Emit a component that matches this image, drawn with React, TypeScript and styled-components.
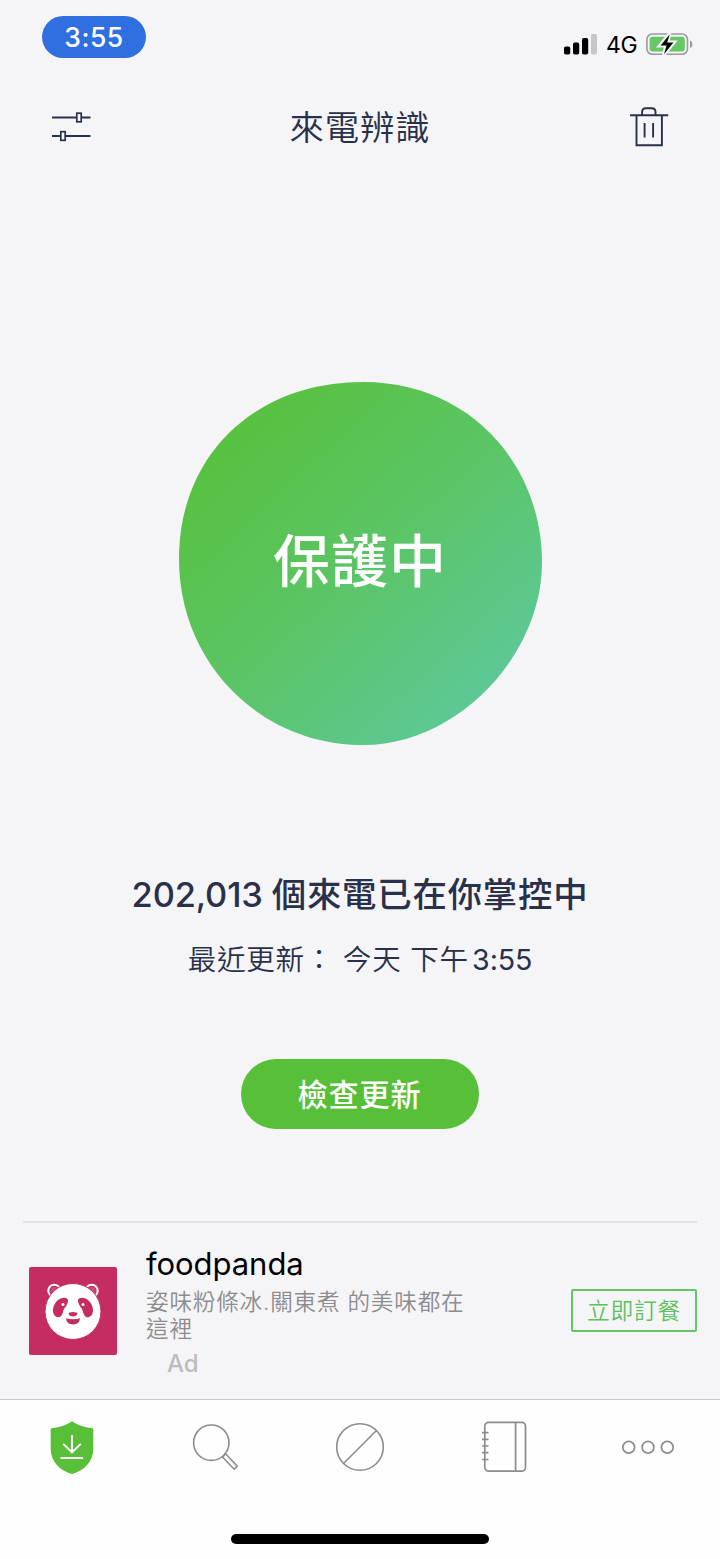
import React from "react";
import styled, { createGlobalStyle } from "styled-components";

const INK = "#29304a";
const GREEN = "#57c038";
const GRAY = "#8c8c8c";

const GlobalStyle = createGlobalStyle`
  * { box-sizing: border-box; }
  body {
    margin: 0;
    background: #f5f5f8;
    font-family: Inter, "Noto Sans CJK TC", sans-serif;
  }
  button { font: inherit; border: 0; padding: 0; background: none; display: flex; }
  svg { display: block; overflow: visible; }
`;

const Screen = styled.div`
  width: 720px;
  height: 1559px;
  display: flex;
  flex-direction: column;
  background: #f5f5f8;
  overflow: hidden;
`;

const StatusBar = styled.div`
  height: 88px;
  padding: 16px 27px 0 42px;
  display: flex;
  justify-content: space-between;
  align-items: flex-start;
`;

const TimePill = styled.div`
  width: 104px;
  height: 42px;
  border-radius: 21px;
  background: #2f6fe0;
  color: #fff;
  font-size: 26.5px;
  font-weight: 550;
  line-height: 43px;
  text-align: center;
  letter-spacing: 0.5px;
`;

const StatusIcons = styled.div`
  display: flex;
  align-items: center;
  height: 24px;
  margin-top: 17px;
`;

const Network = styled.span`
  width: 31px;
  margin: 0 9px;
  font-size: 23px;
  line-height: 24px;
  letter-spacing: -0.4px;
  color: #000;
  white-space: nowrap;
`;

const Header = styled.header`
  height: 78px;
  padding: 0 51px;
  display: flex;
  align-items: center;
  justify-content: space-between;
`;

const Title = styled.h1`
  margin: 0;
  padding: 2px 1px 0 0;
  color: ${INK};
  font-size: 34.4px;
  font-weight: 350;
  letter-spacing: 0.8px;
  line-height: 50px;
`;

const Hero = styled.main`
  flex: 1;
  display: flex;
  flex-direction: column;
  align-items: center;
  padding-top: 216px;
`;

const Shield = styled.div`
  display: grid;
  width: 363px;
  height: 363px;
  > * { grid-area: 1 / 1; }
`;

const ShieldLabel = styled.div`
  place-self: center;
  padding-bottom: 3px;
  color: #fff;
  font-size: 57px;
  font-weight: 500;
  letter-spacing: 1px;
  line-height: 80px;
`;

const Count = styled.div`
  margin-top: 125px;
  color: ${INK};
  font-size: 34.4px;
  font-weight: 500;
  line-height: 50px;
  letter-spacing: 0.8px;
  white-space: nowrap;
`;

const Digits = styled.span`
  letter-spacing: -0.15px;
`;

const Updated = styled.div`
  margin-top: 18px;
  color: ${INK};
  font-size: 28.6px;
  font-weight: 350;
  line-height: 44px;
  letter-spacing: 0.7px;
  white-space: pre;
`;

const Clock = styled.span`
  font-weight: 400;
  letter-spacing: -0.1px;
  word-spacing: -4.6px;
`;

const UpdateButton = styled.button`
  margin-top: 77px;
  width: 238px;
  height: 70px;
  padding: 0 1px 3px 0;
  border-radius: 35px;
  background: ${GREEN};
  color: #fff;
  font-size: 30.2px;
  font-weight: 500;
  letter-spacing: 0.8px;
  align-items: center;
  justify-content: center;
`;

const Ad = styled.section`
  height: 178px;
  margin: 0 23px;
  border-top: 2px solid #e1e1e5;
  padding-left: 6px;
  display: flex;
  align-items: flex-start;
`;

const AdLogo = styled.div`
  width: 88px;
  height: 88px;
  margin-top: 44px;
  border-radius: 2px;
  background: #c52c62;
`;

const AdCopy = styled.div`
  flex: 1;
  padding: 22px 0 0 29px;
`;

const AdName = styled.div`
  color: #000;
  font-size: 31px;
  line-height: 38px;
  letter-spacing: -0.05px;
`;

const AdText = styled.p`
  margin: 5px 0 0;
  width: 330px;
  color: ${GRAY};
  font-size: 22.6px;
  font-weight: 350;
  line-height: 27px;
  letter-spacing: 0.8px;
`;

const AdTag = styled.div`
  margin: 8px 0 0 21px;
  color: #bcbcbf;
  font-size: 24px;
  font-weight: 500;
  line-height: 28px;
`;

const OrderButton = styled.button`
  width: 126px;
  height: 43px;
  margin-top: 66px;
  padding: 0 0 2px;
  border: 2px solid #64c468;
  border-radius: 2px;
  color: #5cc160;
  font-size: 22.8px;
  font-weight: 350;
  letter-spacing: 0.7px;
  align-items: center;
  justify-content: center;
`;

const TabBar = styled.nav`
  height: 160px;
  background: #fefefe;
  border-top: 1px solid #c6c6c9;
  display: flex;
  flex-direction: column;
  align-items: center;
`;

const Tabs = styled.div`
  width: 100%;
  height: 94px;
  display: grid;
  grid-template-columns: repeat(5, 1fr);
`;

const Tab = styled.button`
  align-items: center;
  justify-content: center;
`;

const HomeIndicator = styled.div`
  width: 258px;
  height: 10px;
  margin-top: 40px;
  border-radius: 5px;
  background: #000;
`;

const Signal = () => (
  <svg width="33" height="22" viewBox="0 0 33 22">
    <rect x="0" y="12.5" width="6.2" height="8" rx="1.8" />
    <rect x="9" y="8.6" width="6.2" height="11.9" rx="1.8" />
    <rect x="18" y="4" width="6.2" height="16.5" rx="1.8" />
    <rect x="27" y="0" width="6" height="20.5" rx="1.8" fill="#c6c6c8" />
  </svg>
);

const Battery = () => (
  <svg width="47" height="24" viewBox="0 0 47 24">
    <rect x="0.9" y="1" width="40.6" height="20.2" rx="5.5" fill="none" stroke="#9b9b9d" strokeWidth="1.6" />
    <rect x="3.6" y="3.8" width="35.2" height="14.8" rx="3" fill="#65c766" />
    <path d="M44 7.400c3.200 1.200 3.200 6.400 0 7.600z" fill="#9b9b9d" />
    <path d="M23.800 .2 13.400 12.800h6.400L17.600 22.200 28.400 9.200h-6.600z" fill="#000" stroke="#f5f5f8" strokeWidth="3.200" />
    <path d="M23.800 1.200 14.600 12.400h6L18 21.200 27.400 9.600h-6.200z" fill="#000" />
  </svg>
);

const Sliders = () => (
  <svg width="40" height="30" viewBox="0 0 40 30" fill="none" stroke={INK}>
    <path d="M1 5.500H25.500M30.500 5.500H39.500M1 24H9.500M14.500 24H39.500" strokeWidth="2" />
    <rect x="25.800" y="1.200" width="4.400" height="8.600" strokeWidth="1.700" />
    <rect x="9.800" y="19.700" width="4.400" height="8.600" strokeWidth="1.700" />
  </svg>
);

const Trash = () => (
  <svg width="39" height="40" viewBox="0 0 39 40" fill="none" stroke={INK} strokeWidth="1.900">
    <path d="M0 8.300H38.200M6.500 8.300V38.300H31.900V8.300M14.600 16V30.500M23.100 16V30.500" />
    <path d="M12.100 8.300V5Q12.100 1.200 15.800 1.200H21.800Q25.500 1.200 25.500 5V8.300" />
  </svg>
);

const Blob = () => (
  <svg width="363" height="363" viewBox="0 0 363 363">
    <defs>
      <linearGradient id="blob" x1="0.17" y1="0.12" x2="0.86" y2="0.86">
        <stop offset="0" stopColor="#58c140" />
        <stop offset="0.5" stopColor="#5bc566" />
        <stop offset="1" stopColor="#5dc896" />
      </linearGradient>
    </defs>
    <path
      fill="url(#blob)"
      d="M184 0C292 0 363 84 363 180C363 274 278 363 184 363C81 363 0 281 0 177C0 71 78 0 184 0Z"
    />
  </svg>
);

const Panda = () => (
  <svg width="88" height="88" viewBox="0 0 88 88">
    <g fill="#c52c62" stroke="#fff" strokeWidth="2">
      <circle cx="25.300" cy="23.700" r="6" />
      <circle cx="62.700" cy="23.700" r="6" />
    </g>
    <circle cx="25.300" cy="23.700" r="3.600" fill="#fff" opacity=".15" />
    <circle cx="62.700" cy="23.700" r="3.600" fill="#fff" opacity=".15" />
    <circle cx="44" cy="44.500" r="28" fill="#fff" stroke="#c52c62" strokeWidth="1" />
    <g fill="#c52c62">
      <path d="M39 33C38 30 33 30 29 33C23 38 22 48 28 50C31 51 33 49 34 45C35 40 39 39 39 33Z" />
      <path d="M49 33C50 30 55 30 59 33C65 38 66 48 60 50C57 51 55 49 54 45C53 40 49 39 49 33Z" />
      <path d="M39.500 46.500Q40 45 44 45Q48 45 48.500 46.500Q47.500 49.500 44 49.500Q40.500 49.500 39.500 46.500Z" />
      <path d="M37 51.300Q44 53.200 51 51.300Q50.500 57.500 44 57.500Q37.500 57.500 37 51.300Z" />
    </g>
    <circle cx="34" cy="37.500" r="1.500" fill="#fff" />
    <circle cx="54" cy="37.500" r="1.500" fill="#fff" />
  </svg>
);

const ShieldIcon = () => (
  <svg width="44" height="54" viewBox="0 -0.700 44 54">
    <path
      d="M22 .6C27 4 34 6.800 42 7.300Q43.300 7.500 43.300 9V28C43.300 41 34 50 22 53.400C10 50 .7 41 .7 28V9Q.7 7.500 2 7.300C10 6.800 17 4 22 .6Z"
      fill={GREEN}
    />
    <path d="M22 14.200V31.500M13.300 23.200 22 31.700 30.700 23.200M10.500 37.200H33" fill="none" stroke="#fff" strokeWidth="2" />
  </svg>
);

const SearchIcon = () => (
  <svg width="46" height="48" viewBox="0 0 46 48" fill="none" stroke={GRAY} strokeWidth="1.600">
    <circle cx="18.300" cy="19.700" r="17.700" />
    <path d="M32.600 30.800 44.200 43.200 41.200 46.200 29.400 34.100Z" />
  </svg>
);

const BlockIcon = () => (
  <svg width="48" height="48" viewBox="0 0 48 48" fill="none" stroke={GRAY} strokeWidth="1.600">
    <circle cx="24" cy="24" r="23.300" />
    <path d="M7.800 40.200 40.200 7.800" />
  </svg>
);

const BookIcon = () => (
  <svg width="46" height="52" viewBox="0 0 46 52" fill="none" stroke={GRAY} strokeWidth="1.700">
    <rect x="3.800" y="1.300" width="40.700" height="48.900" rx="4" />
    <path d="M34.600 1.300V50.200M1 11.700H7.500M1 18.300H7.500M1 25H7.500M1 31.700H7.500M1 38.500H7.500" />
  </svg>
);

const MoreIcon = () => (
  <svg width="52" height="14" viewBox="0 0 52 14" fill="none" stroke={GRAY} strokeWidth="1.700">
    <circle cx="6.700" cy="7.300" r="5.900" />
    <circle cx="26" cy="7.300" r="5.900" />
    <circle cx="45.300" cy="7.300" r="5.900" />
  </svg>
);

export default function App() {
  return (
    <Screen>
      <GlobalStyle />
      <StatusBar>
        <TimePill>3:55</TimePill>
        <StatusIcons>
          <Signal />
          <Network>4G</Network>
          <Battery />
        </StatusIcons>
      </StatusBar>
      <Header>
        <button aria-label="設定"><Sliders /></button>
        <Title>來電辨識</Title>
        <button aria-label="刪除"><Trash /></button>
      </Header>
      <Hero>
        <Shield>
          <Blob />
          <ShieldLabel>保護中</ShieldLabel>
        </Shield>
        <Count><Digits>202,013 </Digits>個來電已在你掌控中</Count>
        <Updated>最近更新： 今天 下午<Clock> 3:55</Clock></Updated>
        <UpdateButton>檢查更新</UpdateButton>
      </Hero>
      <Ad>
        <AdLogo><Panda /></AdLogo>
        <AdCopy>
          <AdName>foodpanda</AdName>
          <AdText>姿味粉條冰.關東煮 的美味都在這裡</AdText>
          <AdTag>Ad</AdTag>
        </AdCopy>
        <OrderButton>立即訂餐</OrderButton>
      </Ad>
      <TabBar>
        <Tabs>
          <Tab aria-label="防護"><ShieldIcon /></Tab>
          <Tab aria-label="搜尋"><SearchIcon /></Tab>
          <Tab aria-label="封鎖"><BlockIcon /></Tab>
          <Tab aria-label="通訊錄"><BookIcon /></Tab>
          <Tab aria-label="更多"><MoreIcon /></Tab>
        </Tabs>
        <HomeIndicator />
      </TabBar>
    </Screen>
  );
}
